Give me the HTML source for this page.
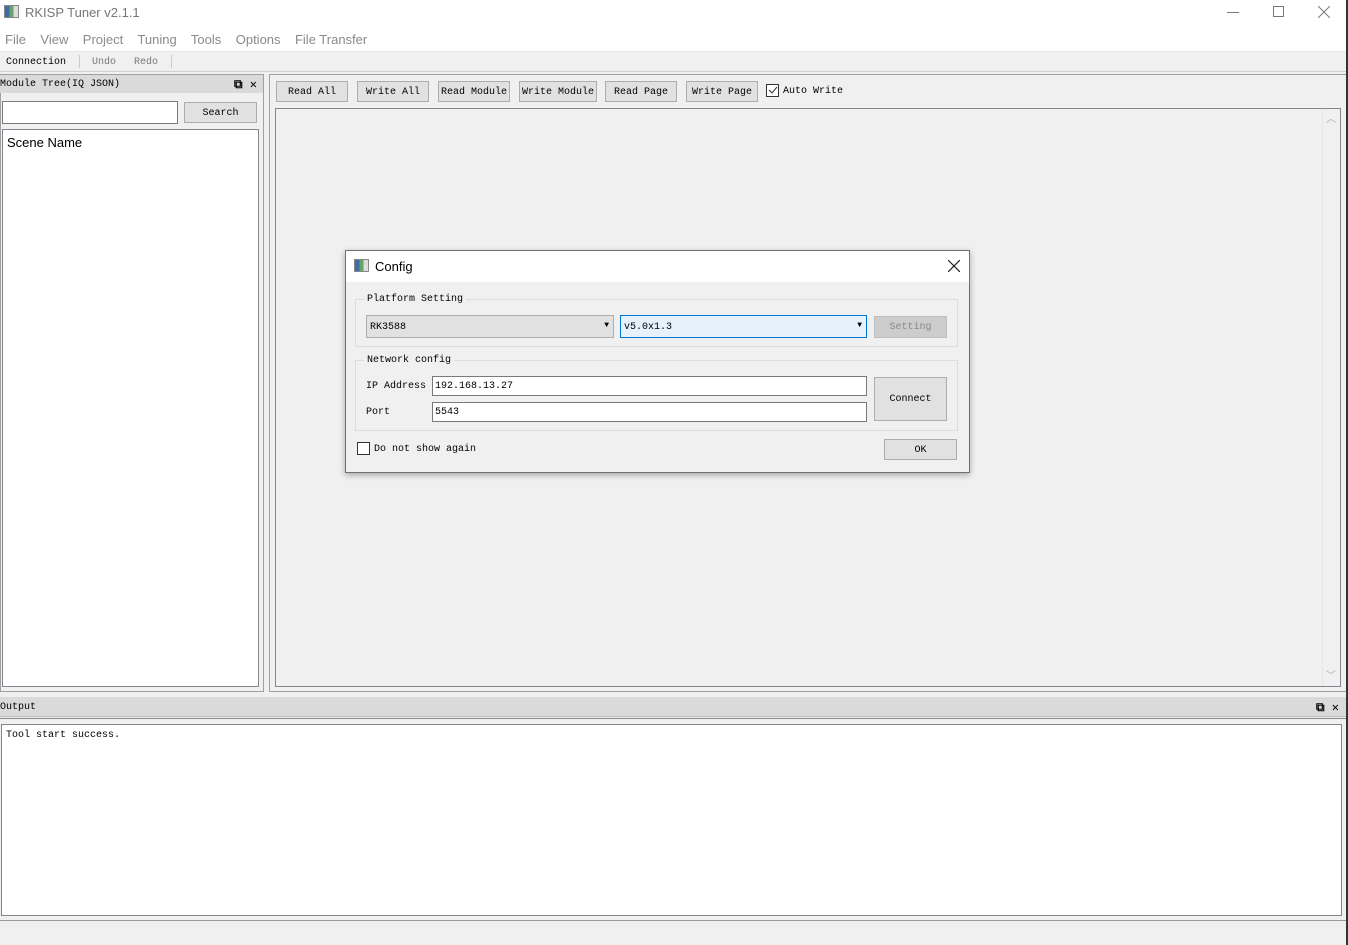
<!DOCTYPE html>
<html><head><meta charset="utf-8"><style>
*{box-sizing:border-box;margin:0;padding:0}
body{width:1348px;height:945px;overflow:hidden;background:#f0f0f0;position:relative;font-family:"Liberation Mono","Noto Serif CJK SC",monospace;font-size:10px;color:#000}
.a{position:absolute}
.ui{font-family:"Liberation Sans",sans-serif}
.btn{position:absolute;background:#e1e1e1;border:1px solid #adadad;text-align:center;font-size:10px;line-height:20px;white-space:nowrap}
.inp{position:absolute;background:#fff;border:1px solid #7a7a7a;padding-left:2px;font-size:10px}
.grp{position:absolute;border:1px solid #dcdcdc}
.glab{position:absolute;background:#f0f0f0;padding:0 3px;font-size:10px}
</style></head><body>
<div class="a" style="left:0;top:0;width:1348px;height:51px;background:#fff"></div>
<div class="a" style="left:4px;top:5px;width:15px;height:13px;border:1px solid #888;background:linear-gradient(90deg,#3a6ea5 0 35%,#6aa36a 35% 65%,#ddd 65%)"></div>
<div class="a ui" style="left:25px;top:5px;font-size:13px;color:#777">RKISP Tuner v2.1.1</div>
<div class="a" style="left:1227px;top:12px;width:12px;height:1px;background:#777"></div>
<div class="a" style="left:1273px;top:6px;width:11px;height:11px;border:1px solid #777"></div>
<svg class="a" style="left:1318px;top:6px" width="12" height="12"><path d="M0 0L12 12M12 0L0 12" stroke="#777" stroke-width="1"/></svg>
<div class="a ui" style="left:5px;top:32px;font-size:13px;color:#8a8a8a;white-space:pre">File    View    Project    Tuning    Tools    Options    File Transfer</div>
<div class="a" style="left:0;top:51px;width:1348px;height:1px;background:#e6e6e6"></div>
<div class="a" style="left:6px;top:57px">Connection</div>
<div class="a" style="left:79px;top:55px;width:1px;height:13px;background:#ccc"></div>
<div class="a" style="left:92px;top:57px;color:#777">Undo</div>
<div class="a" style="left:134px;top:57px;color:#777">Redo</div>
<div class="a" style="left:171px;top:55px;width:1px;height:13px;background:#ccc"></div>
<div class="a" style="left:0;top:71px;width:1346px;height:1px;background:#d0d0d0"></div>
<div class="a" style="left:0;top:74px;width:264px;height:618px;border:1px solid #a0a0a0"></div>
<div class="a" style="left:0;top:75px;width:263px;height:18px;background:#dadada"></div>
<div class="a" style="left:0;top:79px">Module Tree(IQ JSON)</div>
<div class="a" style="left:234px;top:77px;font-size:12px;font-weight:bold">⧉ ✕</div>
<div class="inp" style="left:2px;top:101px;width:176px;height:23px"></div>
<div class="btn" style="left:184px;top:102px;width:73px;height:21px;line-height:21px">Search</div>
<div class="a" style="left:2px;top:129px;width:257px;height:558px;background:#fff;border:1px solid #828790"></div>
<div class="a ui" style="left:7px;top:135px;font-size:13px">Scene Name</div>
<div class="a" style="left:269px;top:74px;width:1078px;height:618px;border:1px solid #a0a0a0"></div>
<div class="btn" style="left:276px;top:81px;width:72px;height:21px;line-height:22px">Read All</div>
<div class="btn" style="left:357px;top:81px;width:72px;height:21px;line-height:22px">Write All</div>
<div class="btn" style="left:438px;top:81px;width:72px;height:21px;line-height:22px">Read Module</div>
<div class="btn" style="left:519px;top:81px;width:78px;height:21px;line-height:22px">Write Module</div>
<div class="btn" style="left:605px;top:81px;width:72px;height:21px;line-height:22px">Read Page</div>
<div class="btn" style="left:686px;top:81px;width:72px;height:21px;line-height:22px">Write Page</div>
<div class="a" style="left:766px;top:84px;width:13px;height:13px;border:1px solid #333;background:#fff"></div>
<svg class="a" style="left:768px;top:86px" width="10" height="9"><path d="M1 4L4 7L9 1" stroke="#333" fill="none"/></svg>
<div class="a" style="left:783px;top:86px">Auto Write</div>
<div class="a" style="left:275px;top:108px;width:1066px;height:579px;border:1px solid #828790"></div>
<div class="a" style="left:1322px;top:109px;width:18px;height:577px;background:#f0f0f0;border-left:1px solid #e5e5e5"></div>
<div class="a ui" style="left:1326px;top:110px;color:#aaa;font-size:10px">︿</div>
<div class="a ui" style="left:1326px;top:667px;color:#aaa;font-size:10px">﹀</div>
<div class="a" style="left:0;top:697px;width:1346px;height:20px;background:#dadada;border-bottom:1px solid #bbb"></div>
<div class="a" style="left:0;top:702px">Output</div>
<div class="a" style="left:1316px;top:700px;font-size:12px;font-weight:bold">⧉ ✕</div>
<div class="a" style="left:0;top:718px;width:1346px;height:1px;background:#888"></div>
<div class="a" style="left:1px;top:724px;width:1341px;height:192px;background:#fff;border:1px solid #828790"></div>
<div class="a" style="left:6px;top:730px">Tool start success.</div>
<div class="a" style="left:0;top:920px;width:1346px;height:1px;background:#999"></div>
<div class="a" style="left:1346px;top:0;width:2px;height:945px;background:#333"></div>
<div class="a" style="left:345px;top:250px;width:625px;height:223px;background:#f0f0f0;border:1px solid #707070;box-shadow:0 2px 6px rgba(0,0,0,.3)"></div>
<div class="a" style="left:346px;top:251px;width:623px;height:31px;background:#fff"></div>
<div class="a" style="left:354px;top:259px;width:15px;height:13px;border:1px solid #888;background:linear-gradient(90deg,#3a6ea5 0 35%,#6aa36a 35% 65%,#ddd 65%)"></div>
<div class="a ui" style="left:375px;top:259px;font-size:13px">Config</div>
<svg class="a" style="left:948px;top:260px" width="12" height="12"><path d="M0 0L12 12M12 0L0 12" stroke="#222" stroke-width="1.2"/></svg>
<div class="grp" style="left:355px;top:299px;width:603px;height:48px"></div>
<div class="glab" style="left:364px;top:294px">Platform Setting</div>
<div class="a" style="left:366px;top:315px;width:248px;height:23px;background:#e1e1e1;border:1px solid #adadad;padding:6px 0 0 3px">RK3588<span style="position:absolute;right:4px;top:5px;font-size:8px">▼</span></div>
<div class="a" style="left:620px;top:315px;width:247px;height:23px;background:#e5f1fb;border:1px solid #0078d7;padding:6px 0 0 3px">v5.0x1.3<span style="position:absolute;right:4px;top:5px;font-size:8px">▼</span></div>
<div class="btn" style="left:874px;top:316px;width:73px;height:22px;line-height:22px;background:#ccc;border-color:#bfbfbf;color:#888">Setting</div>
<div class="grp" style="left:355px;top:360px;width:603px;height:71px"></div>
<div class="glab" style="left:364px;top:355px">Network config</div>
<div class="a" style="left:366px;top:381px">IP Address</div>
<div class="inp" style="left:432px;top:376px;width:435px;height:20px;padding-top:4px">192.168.13.27</div>
<div class="a" style="left:366px;top:407px">Port</div>
<div class="inp" style="left:432px;top:402px;width:435px;height:20px;padding-top:4px">5543</div>
<div class="btn" style="left:874px;top:377px;width:73px;height:44px;line-height:44px">Connect</div>
<div class="a" style="left:357px;top:442px;width:13px;height:13px;border:1px solid #333;background:#fff"></div>
<div class="a" style="left:374px;top:444px">Do not show again</div>
<div class="btn" style="left:884px;top:439px;width:73px;height:21px;line-height:22px">OK</div>
</body></html>
